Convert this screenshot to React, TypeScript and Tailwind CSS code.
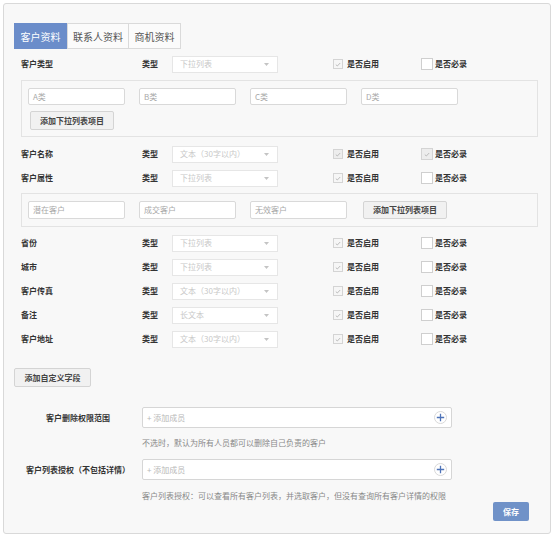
import type { ReactNode } from 'react'

const font = { fontFamily: '"Noto Sans CJK SC", "Noto Sans", sans-serif' }

function Check({ checked, size = 'sm', disabled = false }: { checked: boolean; size?: 'sm' | 'md'; disabled?: boolean }) {
  return (
    <span
      className={
        'flex shrink-0 items-center justify-center border ' +
        (size === 'sm' ? 'h-[10px] w-[10px] ' : 'h-[12px] w-[12px] ') +
        (disabled ? 'border-[#d4d4d4] bg-[#ededed]' : checked ? 'border-[#d4d4d4] bg-[#f6f6f6]' : 'border-[#cfcfcf] bg-white')
      }
    >
      {checked && (
        <svg width="6" height="5" viewBox="0 0 6 5" fill="none">
          <path d="M0.8 2.6 L2.3 4 L5.2 1" stroke="#b5b5b5" strokeWidth="0.9" />
        </svg>
      )}
    </span>
  )
}

function Select({ text }: { text: string }) {
  return (
    <div className="flex h-[17px] w-[106px] items-center justify-between border border-[#e6e6e6] bg-white pl-[7px] pr-[8px] text-[8px] text-[#c8c8c8]">
      <span>{text}</span>
      <svg width="5" height="3" viewBox="0 0 5 3">
        <path d="M0 0 L5 0 L2.5 3 Z" fill="#c4c4c4" />
      </svg>
    </div>
  )
}

type Row = { label: string; type: string; required?: boolean }

function FieldRow({ label, type, required }: Row) {
  return (
    <div className="ml-[7px] flex h-[24px] items-center text-[8px] text-[#333]">
      <span className="w-[121px] font-bold">{label}</span>
      <span className="w-[30px] font-bold">类型</span>
      <Select text={type} />
      <div className="ml-[55px] flex w-[88px] items-center gap-[4px]">
        <Check checked disabled={required} />
        <span className="font-bold">是否启用</span>
      </div>
      <div className="flex items-center gap-[2px]">
        {required ? <Check checked disabled size="md" /> : <Check checked={false} size="md" />}
        <span className="font-bold">是否必录</span>
      </div>
    </div>
  )
}

function TextBox({ text, h = 'h-[17px]' }: { text: string; h?: string }) {
  return (
    <div className={`flex ${h} w-[97px] items-center rounded-[2px] border border-[#d9d9d9] bg-white px-[4px] text-[8px] text-[#a8a8a8]`}>
      {text}
    </div>
  )
}

function GreyButton({ children, className = '' }: { children: ReactNode; className?: string }) {
  return (
    <div className={`flex items-center justify-center rounded-[2px] border border-[#d4d4d4] bg-[#f1f1f1] text-[8px] font-bold text-[#444] ${className}`}>
      {children}
    </div>
  )
}

function SubPanel({ children, className = '' }: { children: ReactNode; className?: string }) {
  return <div className={`ml-[7px] mr-[7px] border border-[#e3e3e3] bg-[#f8f8f8] ${className}`}>{children}</div>
}

function MemberInput() {
  return (
    <div className="flex h-[21px] w-[310px] items-center justify-between rounded-[2px] border border-[#d6d6d6] bg-white pl-[4px] pr-[4px] text-[8px] text-[#b8b8b8]">
      <span>+ 添加成员</span>
      <svg width="13" height="13" viewBox="0 0 13 13">
        <circle cx="6.5" cy="6.5" r="6" fill="white" stroke="#d8d8d8" />
        <path d="M6.5 2.8 V10.2 M2.8 6.5 H10.2" stroke="#4f74b8" strokeWidth="1.3" />
      </svg>
    </div>
  )
}

const lowerRows: Row[] = [
  { label: '省份', type: '下拉列表' },
  { label: '城市', type: '下拉列表' },
  { label: '客户传真', type: '文本（30字以内）' },
  { label: '备注', type: '长文本' },
  { label: '客户地址', type: '文本（30字以内）' },
]

export default function App() {
  return (
    <div className="h-[537px] w-[557px] bg-white pl-[3px] pt-[3px]" style={font}>
      <div className="h-[531px] w-[548px] rounded-[3px] border border-[#d9d9d9] bg-[#f8f8f8] pl-[10px] pr-[5px] pt-[19px]">
        <div className="flex h-[26px] text-[10px]">
          <div className="flex w-[53px] items-center justify-center bg-[#6b8dca] text-white">客户资料</div>
          <div className="flex w-[62px] items-center justify-center border border-[#dadada] bg-[#fbfbfb] text-[#555]">联系人资料</div>
          <div className="flex w-[52px] items-center justify-center border border-l-0 border-[#dadada] bg-[#fbfbfb] text-[#555]">商机资料</div>
        </div>

        <div className="mt-[3px]">
          <FieldRow label="客户类型" type="下拉列表" />
        </div>
        <SubPanel className="mt-[4px] h-[57px] pl-[6px] pt-[7px]">
          <div className="flex gap-[14px]">
            <TextBox text="A类" />
            <TextBox text="B类" />
            <TextBox text="C类" />
            <TextBox text="D类" />
          </div>
          <GreyButton className="ml-[2px] mt-[6px] h-[19px] w-[84px]">添加下拉列表项目</GreyButton>
        </SubPanel>

        <div className="mt-[5px]">
          <FieldRow label="客户名称" type="文本（30字以内）" required />
          <FieldRow label="客户属性" type="下拉列表" />
        </div>
        <SubPanel className="mt-[3px] flex h-[34px] items-center gap-[14px] pl-[6px]">
          <TextBox text="潜在客户" h="h-[18px]" />
          <TextBox text="成交客户" h="h-[18px]" />
          <TextBox text="无效客户" h="h-[18px]" />
          <GreyButton className="ml-[2px] h-[18px] w-[84px]">添加下拉列表项目</GreyButton>
        </SubPanel>

        <div className="mt-[4px]">
          {lowerRows.map((row) => (
            <FieldRow key={row.label} {...row} />
          ))}
        </div>

        <GreyButton className="mt-[17px] h-[19px] w-[77px]">添加自定义字段</GreyButton>

        <div className="mt-[20px] flex items-center">
          <span className="w-[128px] text-center text-[8px] font-bold text-[#333]">客户删除权限范围</span>
          <MemberInput />
        </div>
        <p className="ml-[128px] mt-[9px] text-[8px] leading-[12px] text-[#888]">不选时，默认为所有人员都可以删除自己负责的客户</p>
        <div className="mt-[10px] flex items-center">
          <span className="w-[128px] text-center text-[8px] font-bold text-[#333]">客户列表授权（不包括详情）</span>
          <MemberInput />
        </div>
        <p className="ml-[128px] mt-[10px] text-[8px] leading-[12px] text-[#888]">
          客户列表授权：可以查看所有客户列表，并选取客户，但没有查询所有客户详情的权限
        </p>
        <div className="flex justify-end pr-[16px]">
          <div className="flex h-[19px] w-[36px] items-center justify-center rounded-[2px] bg-[#7092c8] text-[8px] font-bold text-white">
            保存
          </div>
        </div>
      </div>
    </div>
  )
}
